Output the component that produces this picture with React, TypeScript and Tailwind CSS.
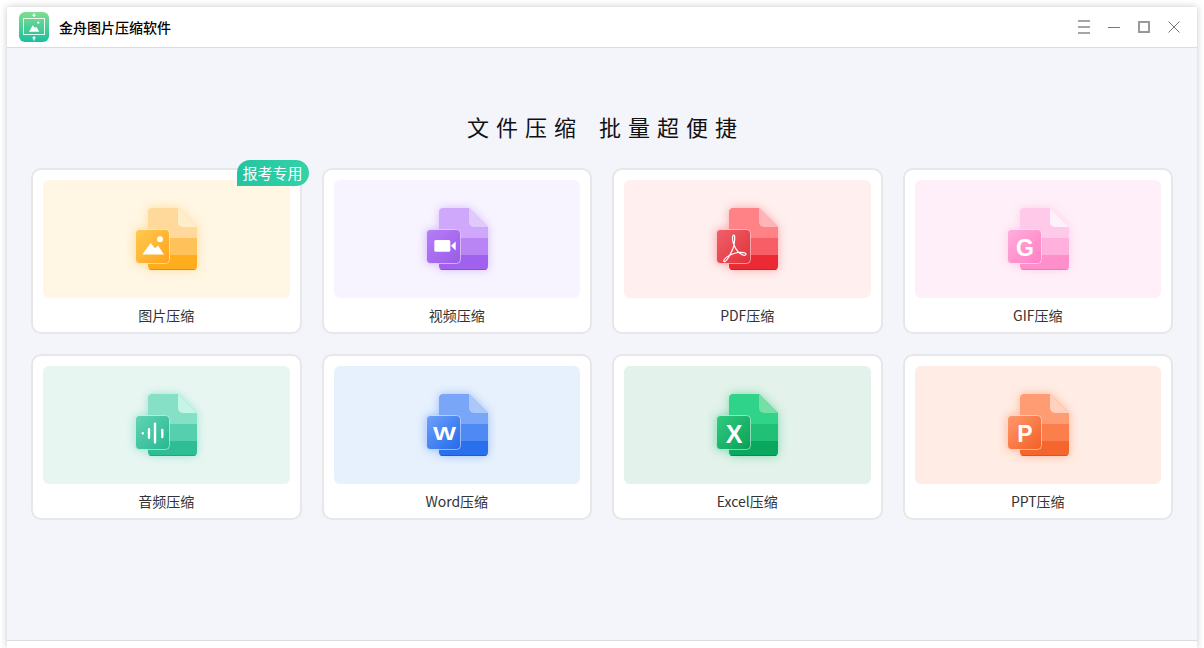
import type { ReactNode } from "react";

type Tool = {
  id: string;
  label: string;
  bg: string;
  top: string;
  mid: string;
  bot: string;
  edge: string;
  fold: string;
  from: string;
  to: string;
  glyph: ReactNode;
};

const letter = (ch: string, x: number, y: number, size: number, len?: number) => (
  <text
    x={x}
    y={y}
    textAnchor="middle"
    fontSize={size}
    fontWeight="700"
    fill="#fff"
    fontFamily="'Liberation Sans', sans-serif"
    textLength={len}
    lengthAdjust={len ? "spacingAndGlyphs" : undefined}
  >
    {ch}
  </text>
);

const tools: Tool[] = [
  {
    id: "img", label: "图片压缩", bg: "bg-[#fff6e3]", top: "#ffd99b", mid: "#ffc25a", bot: "#ffad1d", edge: "#dd8d10", fold: "#ffeecb", from: "#ffcb50", to: "#ffa31c",
    glyph: (
      <g fill="#fff">
        <circle cx="40" cy="44.3" r="3" />
        <path d="M22.300 59.500 30.700 48l4.300 5.300 3-2.800 6 9z" />
      </g>
    ),
  },
  {
    id: "video", label: "视频压缩", bg: "bg-[#f7f4ff]", top: "#cfa8fb", mid: "#b985f5", bot: "#a062ee", edge: "#8b4fd6", fold: "#dfcafb", from: "#b67ef7", to: "#9a5be8",
    glyph: (
      <g fill="#fff">
        <rect x="23.300" y="45" width="16" height="11.700" rx="1.500" />
        <path d="M40 50.800 44.700 46.500v9z" />
      </g>
    ),
  },
  {
    id: "pdf", label: "PDF压缩", bg: "bg-[#ffefef]", top: "#ff8287", mid: "#f75e66", bot: "#ec2a33", edge: "#cf1f28", fold: "#ffb4b7", from: "#f0626b", to: "#e0303a",
    glyph: (
      <path
        d="M33 40c-2 0-2 5 0 10 2 5 6 9 9 10 3 1 4-1 2-2-3-1.500-10-.5-15 2-5 2.500-7 6-6 6.500 2 1 6-6 9-13 1.500-4 2.500-13.500 1-13.500z"
        fill="none"
        stroke="#fff"
        strokeWidth="1.200"
      />
    ),
  },
  {
    id: "gif", label: "GIF压缩", bg: "bg-[#ffeff8]", top: "#ffc9e9", mid: "#ffb0dc", bot: "#ff8fca", edge: "#f27ab8", fold: "#fff1f9", from: "#ffaedc", to: "#ff7fc4",
    glyph: letter("G", 33, 60.500, 23),
  },
  {
    id: "audio", label: "音频压缩", bg: "bg-[#e8f6f2]", top: "#86e0c6", mid: "#55cfae", bot: "#2ebd95", edge: "#22a582", fold: "#c4f5e7", from: "#62d5b6", to: "#27b690",
    glyph: (
      <g stroke="#fff" strokeWidth="2.400" strokeLinecap="round">
        <path d="M22.700 52.300h.1M29 48.300v8.500M35 42.700v18.700M42.300 49v7" />
      </g>
    ),
  },
  {
    id: "word", label: "Word压缩", bg: "bg-[#e7f1fd]", top: "#7aa6f8", mid: "#4f8af4", bot: "#2a6fec", edge: "#1e5ccb", fold: "#abc8fb", from: "#6ea1fa", to: "#2369ea",
    glyph: letter("W", 33.500, 58.800, 19, 23),
  },
  {
    id: "excel", label: "Excel压缩", bg: "bg-[#e3f2ea]", top: "#30d38a", mid: "#20c076", bot: "#0aa85e", edge: "#078c4c", fold: "#74e0a6", from: "#30cc80", to: "#0a9f58",
    glyph: letter("X", 33, 61.500, 25),
  },
  {
    id: "ppt", label: "PPT压缩", bg: "bg-[#ffece4]", top: "#ff9c73", mid: "#fb7f4c", bot: "#f4662b", edge: "#dc5520", fold: "#ffd2be", from: "#ff9a6e", to: "#f35f24",
    glyph: letter("P", 33, 60.500, 23),
  },
];

const FileIcon = ({ tool }: { tool: Tool }) => {
  const body = "M31.500 13H58l19 19v39a4 4 0 0 1-4 4H32a4 4 0 0 1-4-4V17a4 4 0 0 1 3.500-4z";
  return (
    <svg width="90" height="85" viewBox="1 2 90 85" className="block">
      <defs>
        <clipPath id={`doc-${tool.id}`}>
          <path d={body} />
        </clipPath>
        <linearGradient id={`sq-${tool.id}`} x1="0" y1="0" x2="1" y2="1">
          <stop offset="0" stopColor={tool.from} />
          <stop offset="1" stopColor={tool.to} />
        </linearGradient>
        <filter id={`glow-${tool.id}`} x="-40%" y="-40%" width="180%" height="180%">
          <feGaussianBlur stdDeviation="5" />
        </filter>
      </defs>
      <g filter={`url(#glow-${tool.id})`} opacity="0.5" fill={tool.mid}>
        <path d={body} />
        <rect x="15" y="34" width="35" height="35" rx="4" />
      </g>
      <g clipPath={`url(#doc-${tool.id})`}>
        <rect x="28" y="13" width="49" height="30" fill={tool.top} />
        <rect x="28" y="43" width="49" height="17" fill={tool.mid} />
        <rect x="28" y="60" width="49" height="16" fill={tool.bot} />
        <rect x="28" y="74" width="49" height="2" fill={tool.edge} />
      </g>
      <path d="M58 13l19 19H63a5 5 0 0 1-5-5z" fill={tool.fold} />
      <rect x="15.500" y="34.500" width="34" height="34" rx="4" fill={`url(#sq-${tool.id})`} stroke="#fff" strokeOpacity="0.5" />
      {tool.glyph}
    </svg>
  );
};

const Logo = () => (
  <svg width="30" height="30" viewBox="0 0 30 30" className="block">
    <defs>
      <linearGradient id="logo-bg" x1="0" y1="0" x2="0" y2="1">
        <stop offset="0" stopColor="#80dd8e" />
        <stop offset="1" stopColor="#1bbf9f" />
      </linearGradient>
    </defs>
    <rect width="30" height="30" rx="6" fill="url(#logo-bg)" />
    <g fill="#fff">
      <path d="M15 5 12.800 3h1.500V1.300h1.400V3h1.500z" />
      <path d="M15 24l2.200 2.200h-1.500v2.300h-1.400v-2.300h-1.500z" />
      <path d="M10 19.700l3.800-6.500 2.200 2.800 1.300-1.300 3 5z" />
      <circle cx="19.300" cy="10.700" r="1.100" />
    </g>
    <rect x="4.500" y="6.500" width="21" height="16" fill="none" stroke="#fff" strokeOpacity="0.85" />
  </svg>
);

const WindowButtons = () => (
  <div className="flex items-center gap-[18px]">
    <svg width="12" height="14" viewBox="0 0 12 14" className="block">
      <path d="M0 1h12M0 7h12M0 13h12" stroke="#a6a6a6" strokeWidth="2" />
    </svg>
    <svg width="12" height="14" viewBox="0 0 12 14" className="block">
      <path d="M0 7.500h12" stroke="#777" strokeWidth="1" />
    </svg>
    <svg width="12" height="14" viewBox="0 0 12 14" className="block">
      <rect x="1" y="2" width="10" height="10" fill="none" stroke="#999" strokeWidth="2" />
    </svg>
    <svg width="12" height="14" viewBox="0 0 12 14" className="block">
      <path d="M.5 1.500l11 11M11.500 1.500l-11 11" stroke="#777" strokeWidth="1" />
    </svg>
  </div>
);

const ToolCard = ({ tool, badge }: { tool: Tool; badge?: string }) => (
  <div className="relative flex h-[166px] flex-col rounded-[10px] border-2 border-[#e7e7e9] bg-white px-[10px] pt-[10px]">
    {badge && (
      <div className="absolute -right-[9px] -top-[10px] flex h-[26px] w-[72px] items-center justify-center rounded-[13px] rounded-bl-none bg-gradient-to-r from-[#23c4a0] to-[#33d2a9] text-[15px] text-white">
        {badge}
      </div>
    )}
    <div className={`flex h-[118px] items-center justify-center rounded-[6px] ${tool.bg}`}>
      <FileIcon tool={tool} />
    </div>
    <div className="flex flex-1 items-center justify-center text-[14px] text-[#333]">{tool.label}</div>
  </div>
);

export default function App() {
  return (
    <div className="h-[648px] w-[1204px] overflow-hidden bg-white px-[7px] pt-[7px] font-['Noto_Sans_CJK_SC','Liberation_Sans',sans-serif]">
      <div className="flex h-[641px] flex-col bg-white shadow-[0_0_7px_rgba(0,0,0,0.22)]">
        <header className="flex h-[41px] shrink-0 items-center justify-between border-b border-[#dcdcde] pl-[12px] pr-[17px]">
          <div className="flex items-center gap-[10px]">
            <Logo />
            <span className="text-[14px] font-medium text-black">金舟图片压缩软件</span>
          </div>
          <WindowButtons />
        </header>
        <main className="flex-1 bg-[#f4f5fa] px-[24px] pt-[62px]">
          <h1 className="mb-[25px] h-[33px] pl-[7px] text-center text-[22px] leading-[33px] font-normal tracking-[7px] text-[#111]">
            文件压缩<span className="ml-[16px]">批量超便捷</span>
          </h1>
          <div className="grid grid-cols-4 gap-[20px]">
            {tools.map((tool, i) => (
              <ToolCard key={tool.id} tool={tool} badge={i === 0 ? "报考专用" : undefined} />
            ))}
          </div>
        </main>
        <footer className="h-[8px] shrink-0 border-t border-[#dcdcde] bg-white" />
      </div>
    </div>
  );
}
